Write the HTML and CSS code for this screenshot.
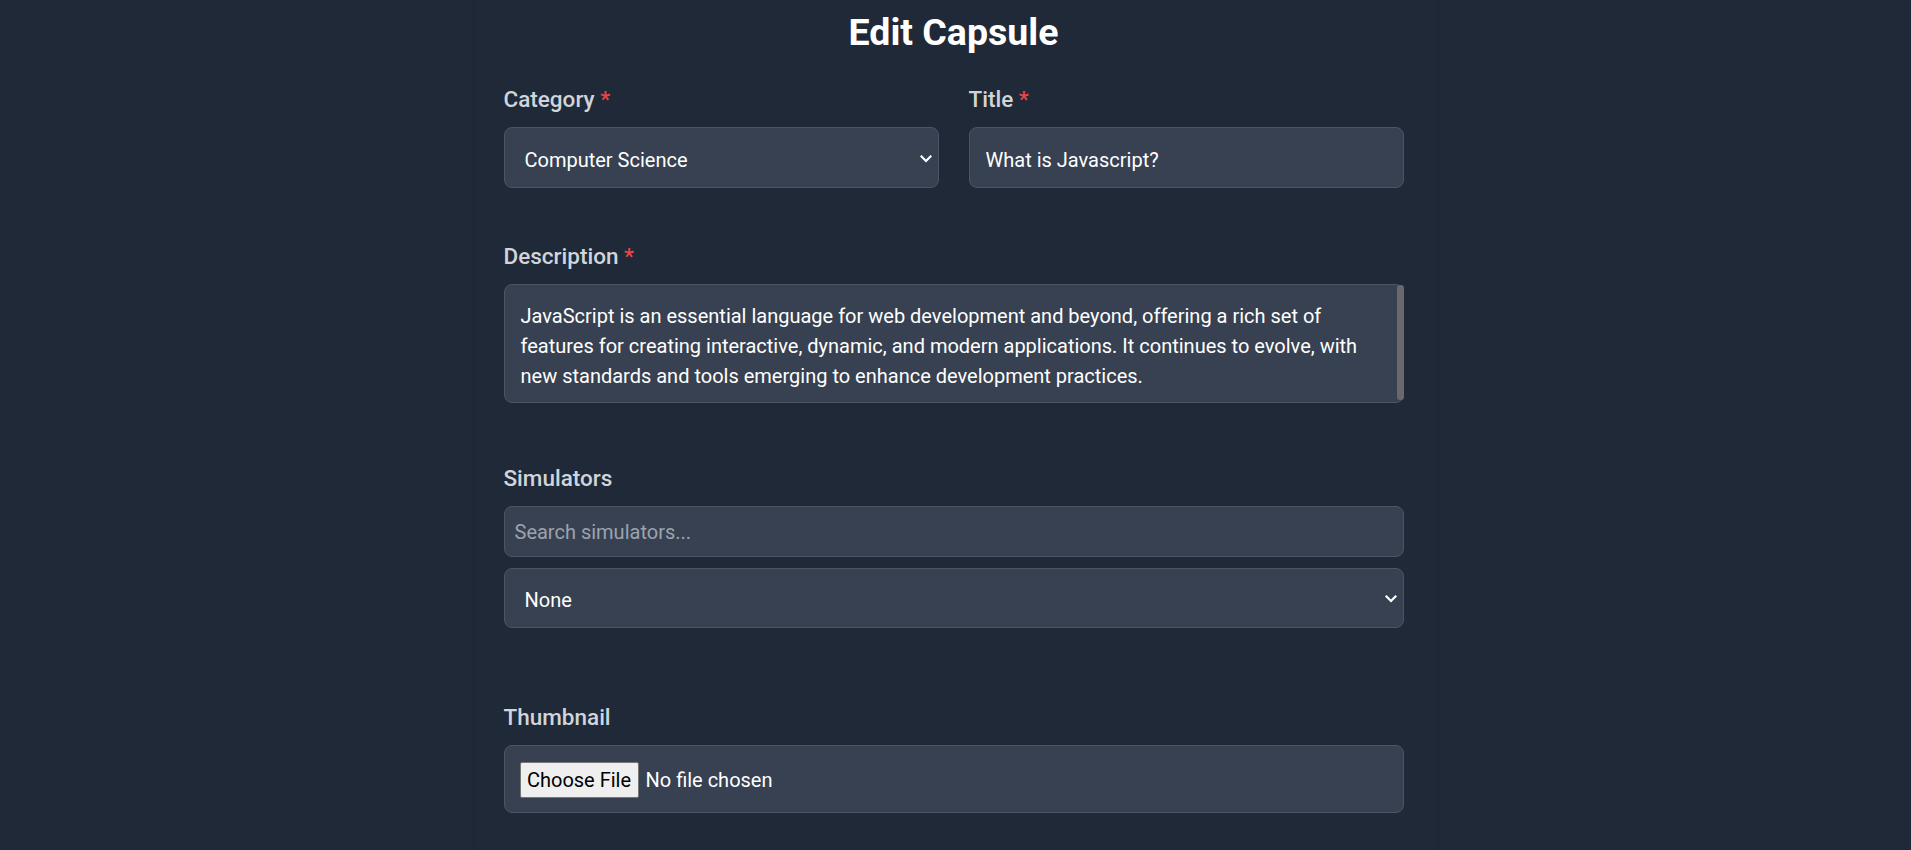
FILE: index.html
```html
<!DOCTYPE html>
<html lang="en">
<head>
<meta charset="utf-8">
<title>Edit Capsule</title>
<link rel="stylesheet" href="styles.css">
</head>
<body>
<main class="panel">
  <h1 class="page-title">Edit Capsule</h1>
  <form class="form">
    <div class="row">
      <div class="field">
        <label class="label" for="category">Category <span class="req">*</span></label>
        <div class="select-wrap">
          <select id="category" class="control select">
            <option>Computer Science</option>
          </select>
          <svg class="chevron" viewBox="0 0 12 8" width="12" height="8" aria-hidden="true"><path d="M1.5 1.5 L6 6 L10.5 1.5" fill="none" stroke="#ffffff" stroke-width="2.2" stroke-linecap="square"/></svg>
        </div>
      </div>
      <div class="field">
        <label class="label" for="title">Title <span class="req">*</span></label>
        <input id="title" class="control input" type="text" value="What is Javascript?">
      </div>
    </div>

    <div class="field field-desc">
      <label class="label" for="desc">Description <span class="req">*</span></label>
      <div class="textarea-wrap">
        <textarea id="desc" class="control textarea">JavaScript is an essential language for web development and beyond, offering a rich set of features for creating interactive, dynamic, and modern applications. It continues to evolve, with new standards and tools emerging to enhance development practices.</textarea>
        <span class="thumb"></span>
      </div>
    </div>

    <div class="field field-sim">
      <label class="label" for="search">Simulators</label>
      <input id="search" class="control search" type="text" placeholder="Search simulators...">
      <div class="select-wrap sim-select">
        <select class="control select">
          <option>None</option>
        </select>
        <svg class="chevron" viewBox="0 0 12 8" width="12" height="8" aria-hidden="true"><path d="M1.5 1.5 L6 6 L10.5 1.5" fill="none" stroke="#ffffff" stroke-width="2.2" stroke-linecap="square"/></svg>
      </div>
    </div>

    <div class="field field-thumb">
      <label class="label" for="thumb">Thumbnail</label>
      <div class="file-box">
        <span class="file-btn">Choose File</span>
        <span class="file-name">No file chosen</span>
      </div>
    </div>
  </form>
</main>
</body>
</html>
```
FILE: styles.css
```css
* { box-sizing: border-box; }

html, body {
  margin: 0;
  padding: 0;
  background: #1f2937;
}

body {
  font-family: Roboto, "Liberation Sans", sans-serif;
  color: #ffffff;
  min-height: 850px;
  overflow: hidden;
}

.panel {
  width: 962px;
  margin: 0 auto;
  min-height: 850px;
  padding: 10px 33px 0 29px;
  background: #1f2937;
  box-shadow: 0 0 3px rgba(0, 0, 0, 0.14);
}

.page-title {
  margin: 0 0 27px;
  font-size: 37.5px;
  line-height: 45px;
  font-weight: 700;
  text-align: center;
  color: #ffffff;
}

.form {
  display: flex;
  flex-direction: column;
}

.row {
  display: grid;
  grid-template-columns: 435px 435px;
  column-gap: 30px;
}

.field {
  display: flex;
  flex-direction: column;
}

.label {
  display: block;
  margin-bottom: 10px;
  font-size: 22.5px;
  line-height: 35px;
  font-weight: 500;
  color: #d1d5db;
}

.req { color: #ef4444; }

.control {
  display: block;
  width: 100%;
  margin: 0;
  font-family: Roboto, "Liberation Sans", sans-serif;
  font-size: 20px;
  color: #ffffff;
  background: #374151;
  border: 1px solid #4b5563;
  border-radius: 8px;
  outline: none;
}

.input {
  height: 61px;
  padding: 4px 16px 0;
}

.select-wrap { position: relative; }

.select {
  appearance: none;
  -webkit-appearance: none;
  height: 61px;
  padding: 4px 36px 0 20px;
}

.chevron {
  position: absolute;
  right: 7px;
  top: 50%;
  margin-top: -3px;
  pointer-events: none;
}

.field-desc { margin-top: 51px; }

.textarea-wrap { position: relative; }

.textarea {
  height: 119px;
  padding: 16px 16px 10px;
  line-height: 30px;
  resize: none;
  overflow: hidden;
}

.thumb {
  position: absolute;
  top: 1px;
  right: 0;
  bottom: 3px;
  width: 7px;
  background: #69686a;
  border-radius: 3px;
}

.field-sim { margin-top: 58px; }

.search {
  height: 51px;
  padding: 0 10px;
}

.search::placeholder { color: #9ca3af; }

.sim-select { margin-top: 11px; }

.sim-select .select { height: 60px; }

.field-thumb { margin-top: 72px; }

.file-box {
  display: flex;
  align-items: center;
  height: 68px;
  padding: 1px 15px 0;
  background: #374151;
  border: 1px solid #4b5563;
  border-radius: 8px;
  font-size: 20px;
}

.file-btn {
  display: flex;
  align-items: center;
  justify-content: center;
  width: 119px;
  height: 36px;
  margin-right: 7px;
  padding-top: 1px;
  background: #efefef;
  color: #000000;
  border: 1px solid #767676;
  border-radius: 2px;
  font-size: 20px;
}

.file-name { color: #ffffff; }
```
